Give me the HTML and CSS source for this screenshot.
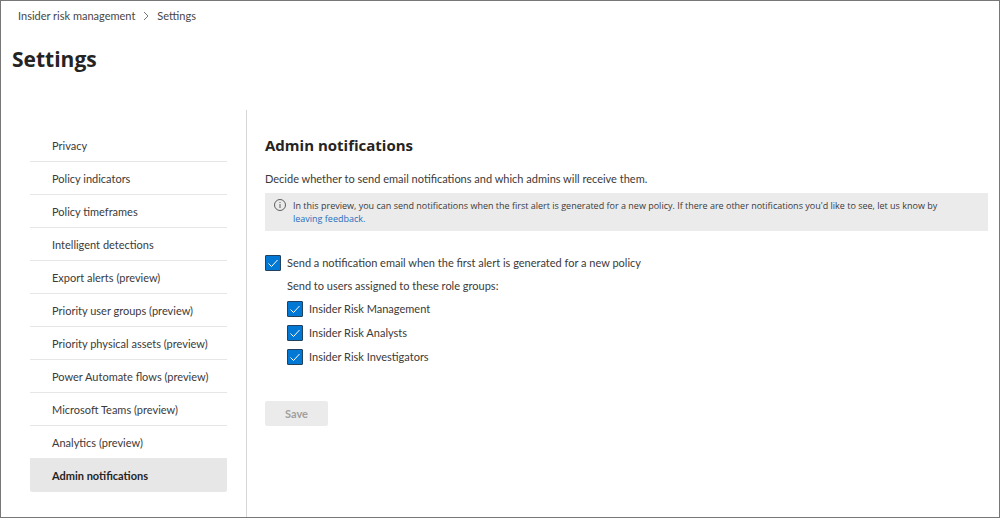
FILE: index.html
```html
<!DOCTYPE html>
<html lang="en">
<head>
<meta charset="utf-8">
<title>Settings - Insider risk management</title>
<link rel="stylesheet" href="styles.css">
</head>
<body>
<div class="page">
  <header class="header">
    <nav class="breadcrumb" aria-label="Breadcrumb">
      <a href="#">Insider risk management</a>
      <svg class="chevron" viewBox="0 0 6 10" aria-hidden="true"><path d="M1 1l4 4-4 4"/></svg>
      <span aria-current="page">Settings</span>
    </nav>
    <h1 class="title">Settings</h1>
  </header>
  <div class="body">
    <nav class="sidebar" aria-label="Settings">
      <ul class="menu">
        <li><a href="#">Privacy</a></li>
        <li><a href="#">Policy indicators</a></li>
        <li><a href="#">Policy timeframes</a></li>
        <li><a href="#">Intelligent detections</a></li>
        <li><a href="#">Export alerts (preview)</a></li>
        <li><a href="#">Priority user groups (preview)</a></li>
        <li><a href="#">Priority physical assets (preview)</a></li>
        <li><a href="#">Power Automate flows (preview)</a></li>
        <li><a href="#">Microsoft Teams (preview)</a></li>
        <li><a href="#">Analytics (preview)</a></li>
        <li><a class="active" href="#" aria-current="true">Admin notifications</a></li>
      </ul>
    </nav>
    <main class="content">
      <h2 class="heading">Admin notifications</h2>
      <p class="intro">Decide whether to send email notifications and which admins will receive them.</p>
      <div class="notice">
        <svg class="info" viewBox="0 0 12 12" aria-hidden="true"><circle cx="6" cy="6" r="5.5"/><path d="M6 5v4M6 3v1"/></svg>
        <p>In this preview, you can send notifications when the first alert is generated for a new policy. If there are other notifications you'd like to see, let us know by <a href="#">leaving feedback.</a></p>
      </div>
      <form class="form">
        <label class="check">
          <span class="box"><input type="checkbox" checked><svg viewBox="0 0 16 16" aria-hidden="true"><path d="M3.5 8.5l3 3 6-6.5"/></svg></span>
          Send a notification email when the first alert is generated for a new policy
        </label>
        <fieldset class="groups">
          <legend>Send to users assigned to these role groups:</legend>
          <label class="check">
            <span class="box"><input type="checkbox" checked><svg viewBox="0 0 16 16" aria-hidden="true"><path d="M3.5 8.5l3 3 6-6.5"/></svg></span>
            Insider Risk Management
          </label>
          <label class="check">
            <span class="box"><input type="checkbox" checked><svg viewBox="0 0 16 16" aria-hidden="true"><path d="M3.5 8.5l3 3 6-6.5"/></svg></span>
            Insider Risk Analysts
          </label>
          <label class="check">
            <span class="box"><input type="checkbox" checked><svg viewBox="0 0 16 16" aria-hidden="true"><path d="M3.5 8.5l3 3 6-6.5"/></svg></span>
            Insider Risk Investigators
          </label>
        </fieldset>
        <button class="save" type="button" disabled>Save</button>
      </form>
    </main>
  </div>
</div>
</body>
</html>
```

FILE: styles.css
```css
* {
  box-sizing: border-box;
}

body {
  margin: 0;
  background: #fff;
  color: #3b3a39;
  font: 11px/16px "Segoe UI", Lato, "Open Sans", sans-serif;
}

h1, h2, p, ul {
  margin: 0;
  padding: 0;
}

a {
  color: inherit;
  text-decoration: none;
}

.page {
  display: flex;
  flex-direction: column;
  min-height: 100vh;
  border: 1px solid #777;
}

.header {
  padding: 7px 11px 0;
}

.breadcrumb {
  display: flex;
  align-items: center;
  gap: 8px;
  padding-left: 6px;
  color: #484644;
}

.chevron {
  width: 6px;
  height: 10px;
  fill: none;
  stroke: #797775;
}

.title,
.heading,
.notice {
  font-family: "Segoe UI", "Open Sans", sans-serif;
}

.title,
.heading {
  color: #252423;
}

.title {
  margin-top: 19px;
  font-size: 21px;
  line-height: 32px;
}

.body {
  display: flex;
  flex: 1;
  margin-top: 35px;
}

.sidebar {
  flex: none;
  width: 246px;
  padding: 19px 19px 0 29px;
  border-right: 1px solid #d6d6d6;
}

.menu {
  list-style: none;
}

.menu a {
  display: block;
  padding: 9px 10px 7px 22px;
  border-bottom: 1px solid #e6e6e6;
}

.menu .active {
  margin-top: -1px;
  padding: 10px 10px 8px 22px;
  border: 0;
  border-radius: 2px;
  background: #e7e7e7;
  color: #252423;
  font-weight: 700;
}

.content {
  flex: 1;
  padding: 24px 11px 0 18px;
}

.heading {
  font-size: 15px;
  line-height: 22px;
}

.intro {
  margin-top: 15px;
}

.notice {
  display: flex;
  align-items: flex-start;
  gap: 7px;
  margin-top: 6px;
  padding: 6px 48px 6px 9px;
  background: #ebebeb;
  font-size: 9px;
  line-height: 13px;
}

.notice a {
  color: #1f6fc0;
}

.info {
  flex: none;
  width: 12px;
  height: 12px;
  fill: none;
  stroke: #605e5c;
}

.form {
  margin-top: 24px;
}

.check {
  display: flex;
  align-items: center;
  gap: 6px;
}

.box {
  display: grid;
  width: 16px;
  height: 16px;
}

.box input,
.box svg {
  grid-area: 1 / 1;
  width: 16px;
  height: 16px;
  margin: 0;
}

.box input {
  appearance: none;
  border: 1px solid #22415f;
  border-radius: 1px;
}

.box input:checked {
  background: #0078d4;
}

.box svg {
  fill: none;
  stroke: #fff;
  pointer-events: none;
}

.groups {
  display: flex;
  flex-direction: column;
  gap: 8px;
  margin: 7px 0 0 22px;
  padding: 0;
  border: 0;
}

.groups legend {
  margin-bottom: 7px;
  padding: 0;
}

.save {
  min-width: 63px;
  height: 25px;
  margin-top: 36px;
  padding: 0 16px;
  border: 0;
  border-radius: 2px;
  background: #ebebeb;
  color: #a19f9d;
  font: inherit;
  font-weight: 700;
}
```
